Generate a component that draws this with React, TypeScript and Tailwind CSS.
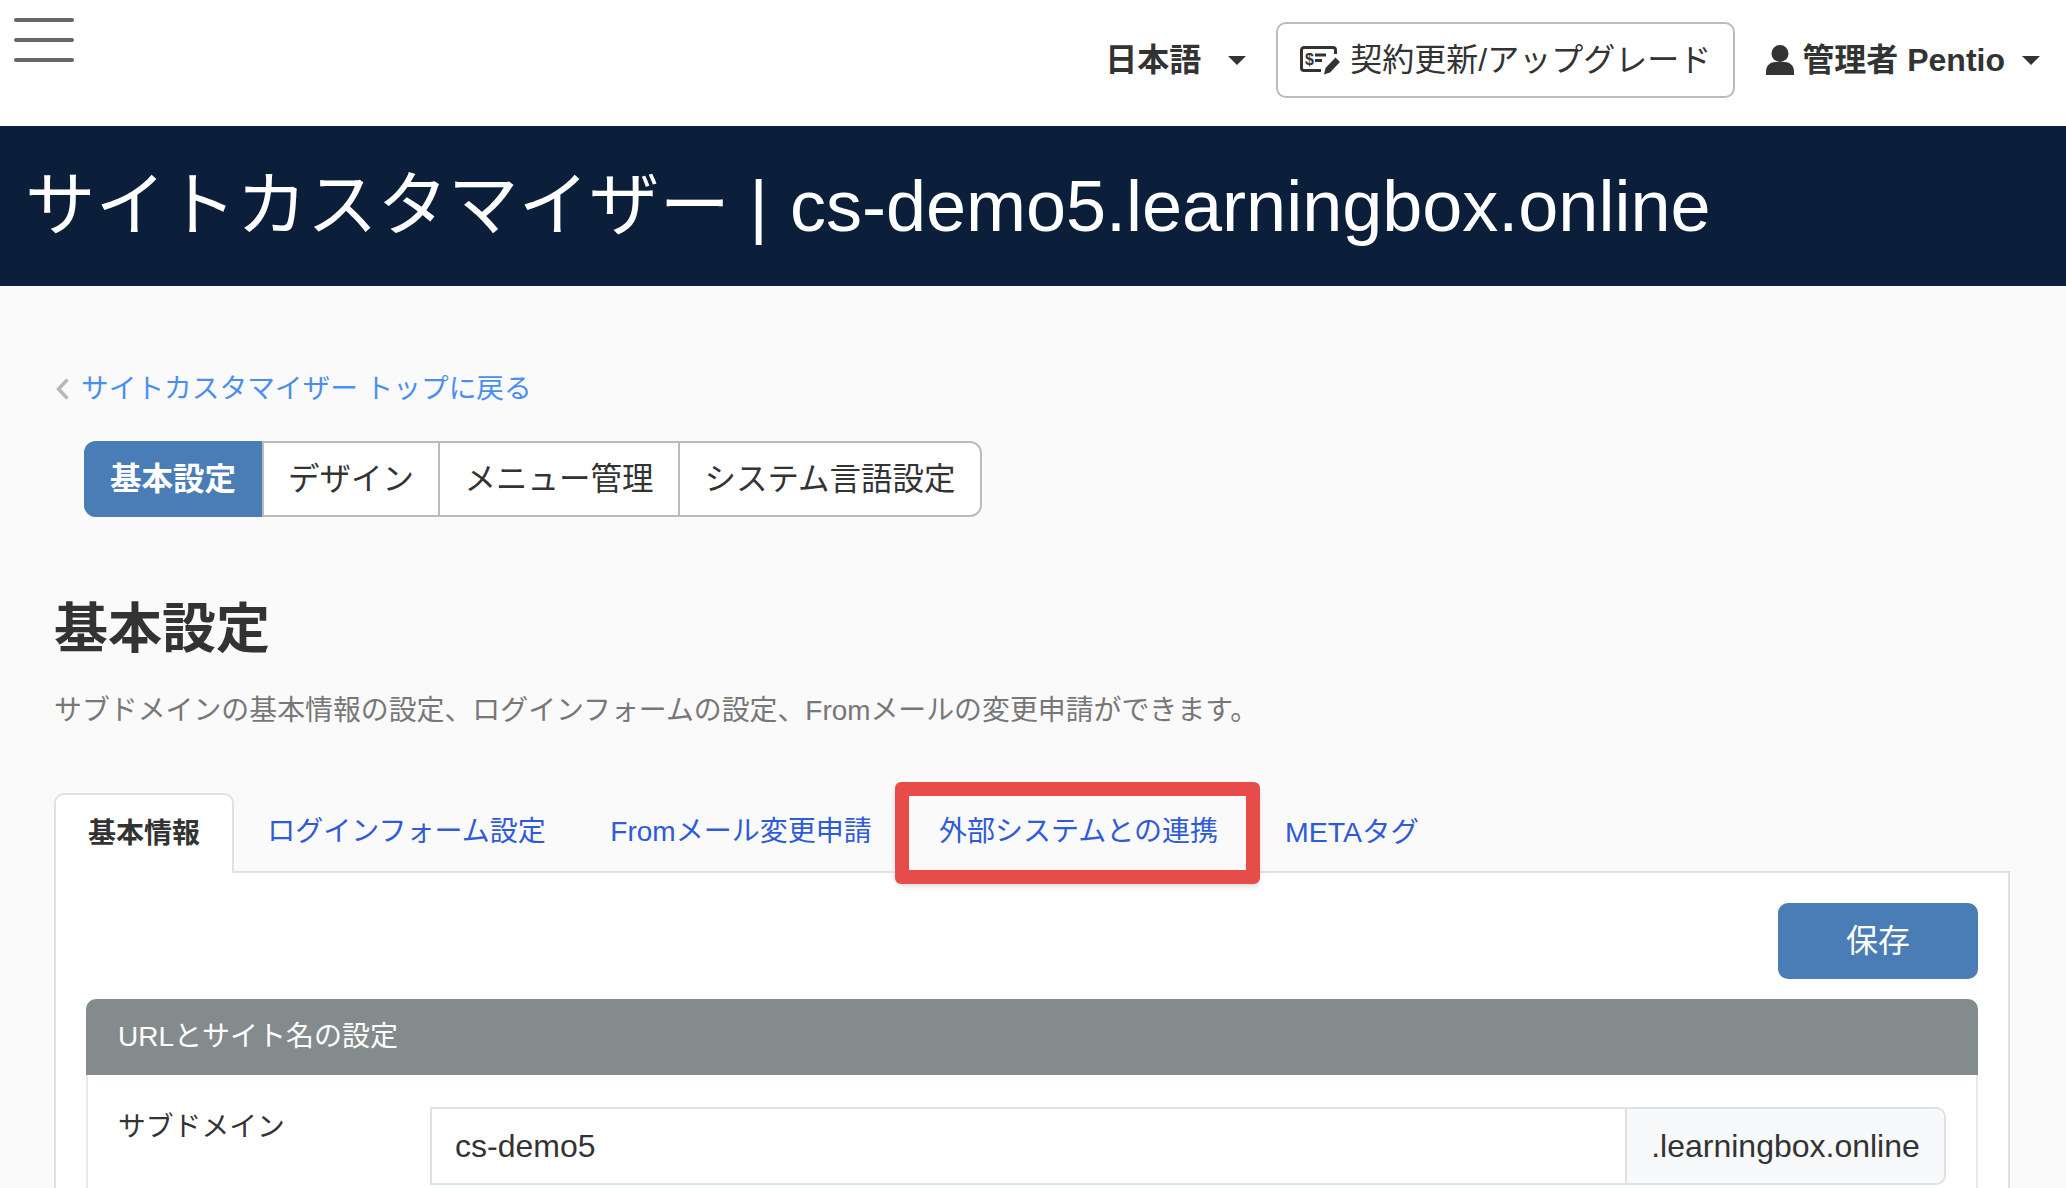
import React from 'react';

function Caret() {
  return <span className="w-0 h-0 border-x-[9px] border-x-transparent border-t-[9px] border-t-[#333]" />;
}

function ChequeIcon() {
  return (
    <svg width="40" height="29" viewBox="0 0 40 29" fill="none" className="text-[#333]">
      <path d="M21 24.500H4a2.500 2.500 0 0 1-2.500-2.500V4A2.500 2.500 0 0 1 4 1.500h29A2.500 2.500 0 0 1 35.500 4v4" stroke="currentColor" strokeWidth="3" />
      <text x="5" y="18.500" fontSize="16" fontWeight="700" fill="currentColor" fontFamily="Liberation Sans">$</text>
      <path d="M15 9h11M15 14.500h7" stroke="currentColor" strokeWidth="3" />
      <path d="M24 28.500l1.500-6.500L35.500 11.500l4.500 4.500L30 26.500z" fill="currentColor" />
    </svg>
  );
}

function UserIcon() {
  return (
    <svg width="28" height="30" viewBox="0 0 28 30" fill="#333">
      <circle cx="14" cy="8.500" r="8.500" />
      <path d="M0 30v-3.500C0 21 4 17 9 17h10c5 0 9 4 9 9.500V30z" />
    </svg>
  );
}

const segments = [
  { label: '基本設定', w: 'w-[178px]', active: true },
  { label: 'デザイン', w: 'w-[176px]' },
  { label: 'メニュー管理', w: 'w-[240px]' },
  { label: 'システム言語設定', w: 'w-[302px]' },
];

export default function App() {
  return (
    <div className="h-[1188px] overflow-hidden bg-[#fafafa] text-[#333] font-['Liberation_Sans','Noto_Sans_CJK_JP',sans-serif]">
      <header className="h-[126px] bg-white flex items-start pl-[14px] pr-[26px]">
        <div className="mt-[18px] w-[60px] flex flex-col gap-[16px]">
          <div className="h-[4px] rounded-full bg-[#666]" />
          <div className="h-[4px] rounded-full bg-[#666]" />
          <div className="h-[4px] rounded-full bg-[#666]" />
        </div>
        <div className="ml-auto mt-[22px] flex items-center h-[76px]">
          <span className="text-[32px] font-bold">日本語</span>
          <span className="ml-[27px] mr-[30px] flex"><Caret /></span>
          <button className="w-[459px] h-[76px] rounded-[10px] border-2 border-[#bbb] bg-white flex items-center justify-center gap-[10px] text-[32px]">
            <ChequeIcon />
            契約更新/アップグレード
          </button>
          <span className="ml-[31px] flex items-center gap-[8px] text-[32px] font-bold">
            <UserIcon />
            管理者 Pentio
          </span>
          <span className="ml-[17px] flex"><Caret /></span>
        </div>
      </header>

      <div className="h-[160px] bg-[#0b1f3b] text-white flex items-center pl-[25px] text-[70.500px] whitespace-nowrap">
        サイトカスタマイザー | <span className="ml-[22px] text-[72px]">cs-demo5.learningbox.online</span>
      </div>

      <main className="pl-[54px] pr-[56px]">
        <a className="mt-[85px] flex items-center gap-[13px] pl-[2px] text-[27.700px] leading-[36px] text-[#4a8ff0]">
          <svg width="13" height="22" viewBox="0 0 13 22" fill="none" stroke="#b5b9bc" strokeWidth="3.500"><path d="M11.500 1.500 2.500 11l9 9.500" /></svg>
          <span className="-ml-[1px]">サイトカスタマイザー トップに戻る</span>
        </a>

        <div className="mt-[34px] ml-[30px] flex w-fit h-[76px] rounded-[12px] border-2 border-[#bbb] bg-white">
          {segments.map((s) => (
            <div
              key={s.label}
              className={`${s.w} flex items-center justify-center pt-[2px] text-[31.500px] border-l-2 first:border-l-0 ${
                s.active ? '-m-[2px] mr-0 rounded-l-[12px] bg-[#4a7db5] text-white font-bold border-[#4a7db5]' : 'border-[#bbb]'
              }`}
            >
              {s.label}
            </div>
          ))}
        </div>

        <h1 className="mt-[77px] text-[54px] leading-[70px] font-bold">基本設定</h1>
        <p className="mt-[27px] text-[27.900px] leading-[40px] text-[#777]">
          サブドメインの基本情報の設定、ログインフォームの設定、Fromメールの変更申請ができます。
        </p>

        <div className="mt-[62px] flex h-[80px] text-[28px] text-[#2f5bd8] border-b-2 border-[#dee2e6]">
          <div className="w-[180px] h-[80px] flex items-center justify-center rounded-t-[10px] border-2 border-b-0 border-[#dee2e6] bg-white text-[#333] font-bold">
            基本情報
          </div>
          <div className="w-[345px] flex items-center justify-center">ログインフォーム設定</div>
          <div className="w-[324px] flex items-center justify-center">Fromメール変更申請</div>
          <div className="relative w-[351px] flex items-center justify-center">
            外部システムとの連携
            <div className="absolute left-[-8px] right-[-6px] top-[-11px] bottom-[-13px] rounded-[6px] border-[14px] border-[#e84c4a] shadow-md" />
          </div>
          <div className="ml-[31px] flex items-center text-[28.500px]">METAタグ</div>
        </div>

        <section className="bg-white border-x-2 border-[#dee2e6] pl-[30px] pr-[30px] h-[400px]">
          <div className="pt-[30px] flex justify-end">
            <button className="w-[200px] h-[76px] rounded-[10px] bg-[#4a7db5] text-white text-[32px]">保存</button>
          </div>
          <div className="mt-[20px] rounded-t-[10px] border-x-2 border-[#e6e8ea] h-[400px]">
            <div className="-mx-[2px] h-[76px] rounded-t-[10px] bg-[#848b8c] text-white text-[28px] flex items-center pl-[32px]">
              URLとサイト名の設定
            </div>
            <div className="mt-[32px] flex pl-[30px] pr-[30px]">
              <div className="w-[312px] text-[27.800px] leading-[40px]">サブドメイン</div>
              <div className="flex-1 flex h-[78px] rounded-r-[10px] border-2 border-[#dee2e6] text-[32px]">
                <div className="flex-1 flex items-center pl-[23px]">cs-demo5</div>
                <div className="w-[319px] flex items-center justify-center rounded-r-[10px] bg-[#f8f9fa] border-l-2 border-[#dee2e6]">
                  .learningbox.online
                </div>
              </div>
            </div>
          </div>
        </section>
      </main>
    </div>
  );
}
